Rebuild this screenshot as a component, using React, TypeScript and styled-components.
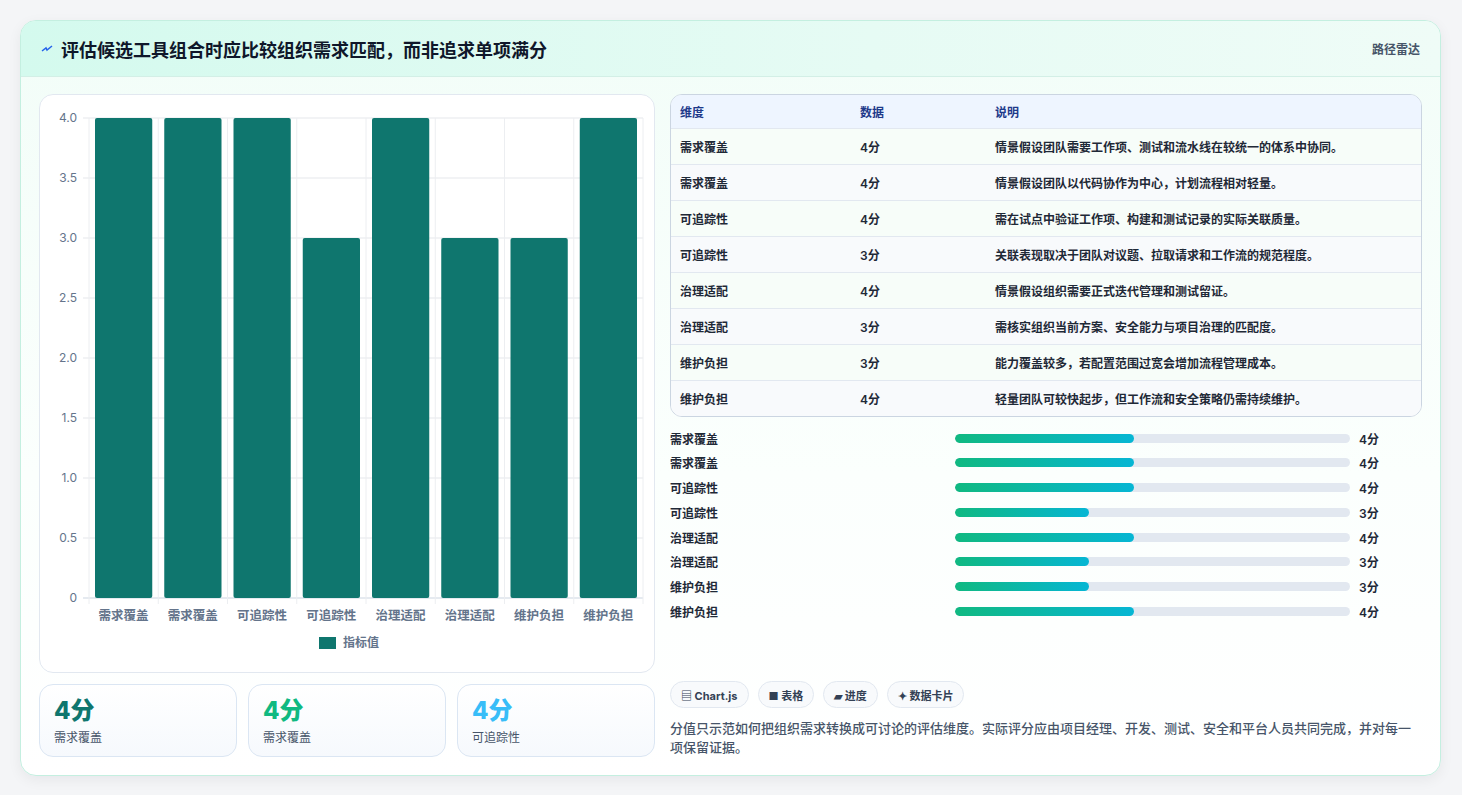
import React from "react";
import styled, { createGlobalStyle } from "styled-components";

const Global = createGlobalStyle`
  body { margin: 0; background: #f4f5f7; font-family: Inter, "Noto Sans CJK SC", sans-serif; }
`;

const Page = styled.div`
  padding: 20px 21px 21px 20px;
  height: 795px;
  box-sizing: border-box;
`;

const Card = styled.div`
  height: 754px;
  border: 1px solid #c4efe0;
  border-radius: 16px;
  background: linear-gradient(180deg, #f2fdf8 0%, #fbfffd 60%, #ffffff 100%);
  box-shadow: 0 4px 14px rgba(15, 23, 42, 0.06);
  overflow: hidden;
  display: flex;
  flex-direction: column;
`;

const Header = styled.div`
  height: 55px;
  flex: none;
  display: flex;
  align-items: center;
  justify-content: space-between;
  padding: 0 20px;
  background: linear-gradient(90deg, #d4faee 0%, #e6fbf4 60%, #effcf7 100%);
  border-bottom: 1px solid #d3efe6;
`;

const Title = styled.h1`
  margin: 0;
  font-size: 18px;
  font-weight: 700;
  color: #0f172a;
  display: flex;
  align-items: center;
  gap: 8px;
`;

const Tag = styled.span`
  font-size: 12px;
  color: #475569;
  font-weight: 600;
`;

const Body = styled.div`
  flex: 1;
  display: grid;
  grid-template-columns: 616px 752px;
  gap: 15px;
  padding: 17px 18px 18px 18px;
`;

const Col = styled.div`
  display: flex;
  flex-direction: column;
`;

const ChartBox = styled.div`
  height: 577px;
  border: 1px solid #e2e8f0;
  border-radius: 14px;
  background: #fff;
  overflow: hidden;
`;

const Stats = styled.div`
  margin-top: 11px;
  display: grid;
  grid-template-columns: repeat(3, 1fr);
  gap: 11px;
`;

const Stat = styled.div`
  height: 73px;
  box-sizing: border-box;
  border: 1px solid #dbe6f3;
  border-radius: 14px;
  background: linear-gradient(180deg, #ffffff, #f6f9fd);
  padding: 12px 14px;
`;

const StatVal = styled.div<{ $c: string }>`
  font-size: 24px;
  font-weight: 800;
  color: ${(p) => p.$c};
  line-height: 28px;
`;

const StatLabel = styled.div`
  font-size: 12px;
  color: #475569;
  margin-top: 3px;
`;

const Table = styled.div`
  border: 1px solid #cbd5e1;
  border-radius: 12px;
  overflow: hidden;
  background: #fff;
`;

const Row = styled.div<{ $head?: boolean; $alt?: boolean }>`
  display: grid;
  grid-template-columns: 180px 135px 1fr;
  height: ${(p) => (p.$head ? 33 : 35)}px;
  align-items: center;
  padding-left: 9px;
  font-size: 12px;
  font-weight: 600;
  color: ${(p) => (p.$head ? "#1e3a8a" : "#1f2937")};
  background: ${(p) => (p.$head ? "#eef5ff" : p.$alt ? "#f8fafc" : "#f7fdf9")};
  border-top: ${(p) => (p.$head ? "none" : "1px solid #e2e8f0")};
`;

const Bars = styled.div`
  margin-top: 12px;
  display: flex;
  flex-direction: column;
  gap: 6.8px;
`;

const BarRow = styled.div`
  display: grid;
  grid-template-columns: 285px 395px 40px;
  gap: 0;
  align-items: center;
  height: 18px;
  font-size: 12px;
  font-weight: 600;
  color: #1f2937;
`;

const Track = styled.div`
  height: 9px;
  border-radius: 5px;
  background: #e2e8f0;
  overflow: hidden;
  margin-right: 0;
`;

const Fill = styled.div`
  height: 100%;
  border-radius: 5px;
  background: linear-gradient(90deg, #10b981, #06b6d4);
`;

const Val = styled.span`
  padding-left: 9px;
`;

const Chips = styled.div`
  margin-top: auto;
  display: flex;
  gap: 9px;
`;

const Chip = styled.span`
  height: 27px;
  box-sizing: border-box;
  border: 1px solid #e2e8f0;
  border-radius: 14px;
  background: #f8fafc;
  padding: 0 10px;
  display: inline-flex;
  align-items: center;
  gap: 4px;
  font-size: 11px;
  font-weight: 700;
  color: #334155;
`;

const Note = styled.p`
  margin: 11px 0 0;
  font-size: 13px;
  line-height: 19px;
  color: #475569;
  font-weight: 500;
`;

const cats = ["需求覆盖", "需求覆盖", "可追踪性", "可追踪性", "治理适配", "治理适配", "维护负担", "维护负担"];
const vals = [4, 4, 4, 3, 4, 3, 3, 4];
const notes = [
  "情景假设团队需要工作项、测试和流水线在较统一的体系中协同。",
  "情景假设团队以代码协作为中心，计划流程相对轻量。",
  "需在试点中验证工作项、构建和测试记录的实际关联质量。",
  "关联表现取决于团队对议题、拉取请求和工作流的规范程度。",
  "情景假设组织需要正式迭代管理和测试留证。",
  "需核实组织当前方案、安全能力与项目治理的匹配度。",
  "能力覆盖较多，若配置范围过宽会增加流程管理成本。",
  "轻量团队可较快起步，但工作流和安全策略仍需持续维护。",
];

const Chart = () => {
  const x0 = 49, x1 = 603, yT = 23, yB = 503;
  const step = (x1 - x0) / 8;
  const ticks = [0, 0.5, 1, 1.5, 2, 2.5, 3, 3.5, 4];
  const fnt = "Inter, 'Noto Sans CJK SC', sans-serif";
  return (
    <svg width="616" height="577" viewBox="0 0 616 577">
      {ticks.map((t) => {
        const y = yB - (t / 4) * (yB - yT);
        return (
          <g key={t}>
            <line x1={x0 - 6} x2={x1} y1={y} y2={y} stroke={t === 0 ? "#cbd5e1" : "#e5e7eb"} />
            <text x={x0 - 12} y={y + 4} textAnchor="end" fontSize="12" fill="#64748b" fontFamily={fnt}>
              {t === 0 ? "0" : t.toFixed(1)}
            </text>
          </g>
        );
      })}
      {Array.from({ length: 9 }).map((_, i) => (
        <line key={i} x1={x0 + i * step} x2={x0 + i * step} y1={yT} y2={yB + 6} stroke="#eceef1" />
      ))}
      {vals.map((v, i) => {
        const h = (v / 4) * (yB - yT);
        return (
          <rect key={i} x={x0 + i * step + 6} y={yB - h} width={step - 12} height={h} rx="2" fill="#0f766e" />
        );
      })}
      {cats.map((c, i) => (
        <text key={i} x={x0 + i * step + step / 2} y={525} textAnchor="middle" fontSize="12.5" fill="#64748b" fontFamily={fnt} fontWeight="600">
          {c}
        </text>
      ))}
      <rect x={279} y={542} width={17} height={12} fill="#0f766e" />
      <text x={303} y={552} fontSize="12" fill="#64748b" fontFamily={fnt} fontWeight="600">指标值</text>
    </svg>
  );
};

export default function App() {
  return (
    <>
      <Global />
      <Page>
        <Card>
          <Header>
            <Title>
              <svg width="12" height="12" viewBox="0 0 12 12">
                <path d="M1 8 L5 5 L6 7 L11 3" stroke="#2563eb" strokeWidth="1.5" fill="none" />
              </svg>
              评估候选工具组合时应比较组织需求匹配，而非追求单项满分
            </Title>
            <Tag>路径雷达</Tag>
          </Header>
          <Body>
            <Col>
              <ChartBox>
                <Chart />
              </ChartBox>
              <Stats>
                <Stat>
                  <StatVal $c="#0f766e">4分</StatVal>
                  <StatLabel>需求覆盖</StatLabel>
                </Stat>
                <Stat>
                  <StatVal $c="#10b981">4分</StatVal>
                  <StatLabel>需求覆盖</StatLabel>
                </Stat>
                <Stat>
                  <StatVal $c="#38bdf8">4分</StatVal>
                  <StatLabel>可追踪性</StatLabel>
                </Stat>
              </Stats>
            </Col>
            <Col>
              <Table>
                <Row $head>
                  <span>维度</span>
                  <span>数据</span>
                  <span>说明</span>
                </Row>
                {cats.map((c, i) => (
                  <Row key={i} $alt={i % 2 === 1}>
                    <span>{c}</span>
                    <span>{vals[i]}分</span>
                    <span>{notes[i]}</span>
                  </Row>
                ))}
              </Table>
              <Bars>
                {cats.map((c, i) => (
                  <BarRow key={i}>
                    <span>{c}</span>
                    <Track>
                      <Fill style={{ width: `${(vals[i] / 4) * 45.3}%` }} />
                    </Track>
                    <Val>{vals[i]}分</Val>
                  </BarRow>
                ))}
              </Bars>
              <Chips>
                <Chip>▤ Chart.js</Chip>
                <Chip>■ 表格</Chip>
                <Chip>▰ 进度</Chip>
                <Chip>✦ 数据卡片</Chip>
              </Chips>
              <Note>
                分值只示范如何把组织需求转换成可讨论的评估维度。实际评分应由项目经理、开发、测试、安全和平台人员共同完成，并对每一项保留证据。
              </Note>
            </Col>
          </Body>
        </Card>
      </Page>
    </>
  );
}
